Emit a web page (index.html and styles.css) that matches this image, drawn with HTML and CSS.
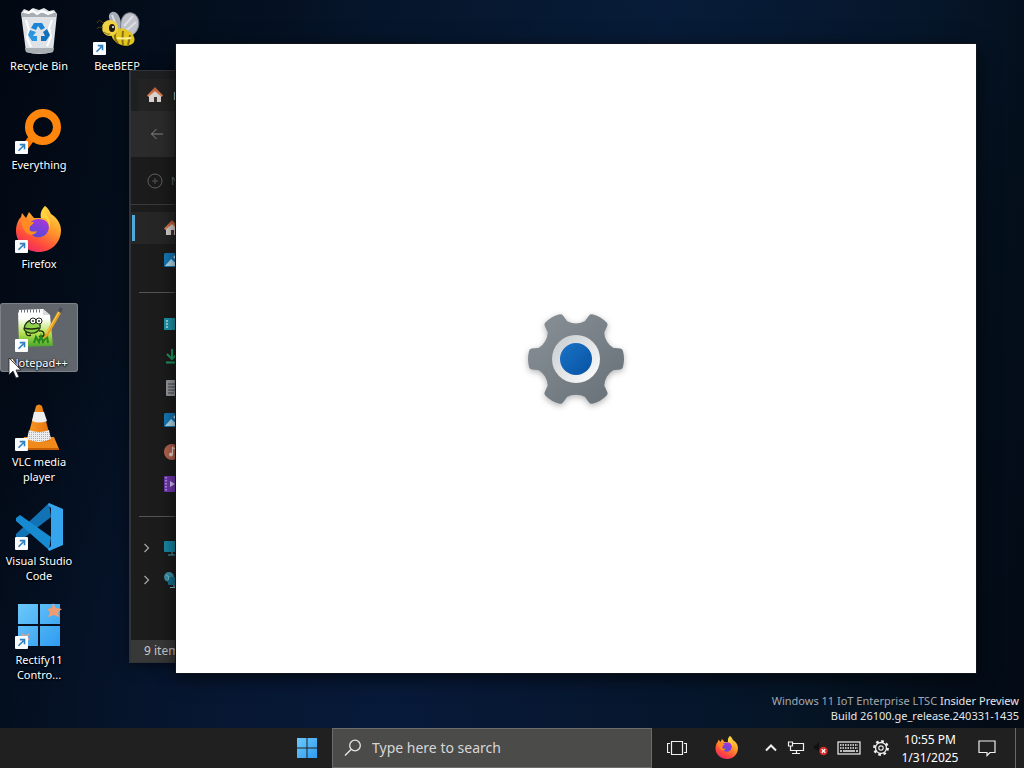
FILE: index.html
```html
<!DOCTYPE html>
<html lang="en">
<head>
    <meta charset="UTF-8">
    <meta name="viewport" content="width=device-width, initial-scale=1.0">
    <title>Desktop</title>
    <link rel="stylesheet" href="styles.css">
</head>
<body>
    <!-- Shared symbols -->
    <svg class="defs" width="0" height="0" aria-hidden="true">
        <defs>
            <linearGradient id="fox" x1="0.8" y1="0" x2="0.25" y2="1">
                <stop offset="0" stop-color="#ffe14a"/>
                <stop offset="0.4" stop-color="#ff9a2a"/>
                <stop offset="0.75" stop-color="#ff4a3d"/>
                <stop offset="1" stop-color="#e8256c"/>
            </linearGradient>
            <linearGradient id="globe" x1="0.7" y1="0" x2="0.3" y2="1">
                <stop offset="0" stop-color="#a838d8"/>
                <stop offset="1" stop-color="#5549d8"/>
            </linearGradient>
            <linearGradient id="win" x1="0" y1="0" x2="1" y2="1">
                <stop offset="0" stop-color="#6cc8fb"/>
                <stop offset="1" stop-color="#2f9cf0"/>
            </linearGradient>
            <linearGradient id="gear" x1="0" y1="0" x2="1" y2="1">
                <stop offset="0" stop-color="#899197"/>
                <stop offset="1" stop-color="#687078"/>
            </linearGradient>
            <linearGradient id="ring" x1="0" y1="0" x2="1" y2="1">
                <stop offset="0" stop-color="#c6cace"/>
                <stop offset="1" stop-color="#ffffff"/>
            </linearGradient>
            <linearGradient id="hub" x1="0" y1="0" x2="1" y2="1">
                <stop offset="0" stop-color="#1a72c6"/>
                <stop offset="1" stop-color="#0752a2"/>
            </linearGradient>
            <linearGradient id="note" x1="0" y1="0" x2="0" y2="1">
                <stop offset="0.25" stop-color="#ffffff"/>
                <stop offset="0.65" stop-color="#b5e04c"/>
                <stop offset="1" stop-color="#48a42c"/>
            </linearGradient>
            <linearGradient id="cone" x1="0" y1="0" x2="1" y2="0">
                <stop offset="0" stop-color="#f89b28"/>
                <stop offset="1" stop-color="#e5700b"/>
            </linearGradient>
            <linearGradient id="roof" x1="0" y1="0" x2="0" y2="1">
                <stop offset="0" stop-color="#b5532e"/>
                <stop offset="1" stop-color="#e58a5c"/>
            </linearGradient>
            <pattern id="dots" width="2" height="2" patternUnits="userSpaceOnUse">
                <rect width="2" height="2" fill="#eceef0"/>
                <rect width="1" height="1" fill="#a9adb4"/>
            </pattern>
            <symbol id="shortcut" viewBox="0 0 13 13">
                <rect width="13" height="13" rx="1" fill="#fafcfd"/>
                <path d="M3.5 9.7 8.5 4.7M4.8 3.6H9.5V8.3" fill="none" stroke="#2f7fc0" stroke-width="1.6"/>
            </symbol>
            <symbol id="firefox" viewBox="0 0 48 48">
                <path d="M30 0c4 3 5 6 6 8 5 3 10 9 10 16 0 13-10 22-22 22S1 37 1 25c0-6 2-11 5-14l1-4 4 5 3-6 5 6 7 0c0-5 1-9 4-12z" fill="url(#fox)"/>
                <path d="M15 17c3-4 9-5 14-3 4 2 6 6 4 11-2 5-7 7-12 6-5-1-7-6-6-14z" fill="url(#globe)"/>
                <path d="M7 12c2 4 7 4 12 4-1 3-5 4-5 7 0 3 5 3 8 2-2 5-9 5-12 0-3-4-4-8-3-13z" fill="#ff8b22"/>
                <path d="M26 12c4-1 9 3 8 10 2-3 1-8-1-11-2-3-3-6-3-11-4 4-5 8-4 12z" fill="#ffd43e"/>
            </symbol>
            <symbol id="house" viewBox="0 0 16 16">
                <path d="M2 7.5 8 2.5l6 5V15H10V10H7v5H2z" fill="#d8d4d2"/>
                <path d="M7 10h3v5H7z" fill="#42352f"/>
                <path d="M8 0 0 8.5 1.4 10 8 4.2 14.6 10 16 8.5z" fill="url(#roof)"/>
            </symbol>
            <symbol id="picture" viewBox="0 0 16 16">
                <rect y="1" width="16" height="14" rx="1.5" fill="#157ab8"/>
                <path d="M1 14 7 7l8 7z" fill="#b8def0"/>
                <circle cx="11" cy="5" r="1.5" fill="#d8edf6"/>
            </symbol>
        </defs>
    </svg>

    <main class="desktop">
        <div class="icons">
            <button class="icon">
                <span class="icon-art">
                    <svg viewBox="0 0 48 48" width="48" height="48">
                        <path d="M6 5 9 1l5 2 4-3 6 2 5-2 5 3 5-1 3 4-4 38q-14 4-27 0z" fill="#dfe3e7"/>
                        <path d="M6 5h36l-1 4H7zM10 40h29l-1 4q-14 3-27 0z" fill="#a9aeb5"/>
                        <path d="M9 4l5 1 3-3 5 4 5-3 6 3 5-2M11 12l3 10-2 8 4 9M37 12l-3 8 2 9-4 9" fill="none" stroke="#ffffff" stroke-width="2"/>
                        <path d="M19 15h8l3 5-4 2-3-4-2 4-5-2z" fill="#1c84d6"/>
                        <path d="M32 21l3 6-4 6h-5v-5h4l-2-4z" fill="#1370bd"/>
                        <path d="M15 22l6 2-3 4h4v5h-5l-4-6z" fill="#2a95e2"/>
                    </svg>
                </span>
                <span class="icon-label">Recycle Bin</span>
            </button>
            <button class="icon">
                <span class="icon-art">
                    <svg viewBox="0 0 48 48" width="48" height="48">
                        <path d="M24 21C16 15 13 6 19 4s10 8 9 17z" fill="#a8acb5"/>
                        <path d="M28 23C26 12 31 3 39 5s9 14 3 20-11 3-14-2z" fill="#bfc2c9" stroke="#777c88"/>
                        <path d="M31 18 40 8M34 22l9-8M23 17 19 7" stroke="#dcdfe5" stroke-width="2"/>
                        <ellipse cx="30" cy="29" rx="12" ry="8" transform="rotate(22 30 29)" fill="#e2c51d"/>
                        <path d="M23 23q-3 8 2 12M30 23q-1 9 0 14M37 27q-1 6-2 10" fill="none" stroke="#8a7014" stroke-width="2"/>
                        <circle cx="17" cy="20" r="8" fill="#efd344"/>
                        <path d="M24 30q6 1 14 0" stroke="#fff28c" stroke-width="2" fill="none"/>
                        <ellipse cx="19" cy="20" rx="3" ry="4" fill="#1f1a12"/>
                        <circle cx="20" cy="19" r="1" fill="#fff"/>
                        <path d="M10 15Q6 10 4 15M10 20q-5-2-6 1" fill="none" stroke="#4a4010"/>
                        <path d="M11 24q3 3 6 2" stroke="#8a6a15" fill="none"/>
                    </svg>
                    <svg class="badge" width="13" height="13"><use href="#shortcut"/></svg>
                </span>
                <span class="icon-label">BeeBEEP</span>
            </button>
            <button class="icon">
                <span class="icon-art">
                    <svg viewBox="0 0 48 48" width="48" height="48">
                        <path d="M19 28 10 40" stroke="#f97a08" stroke-width="7"/>
                        <circle cx="28" cy="20" r="14" fill="none" stroke="#ff850d" stroke-width="8"/>
                    </svg>
                    <svg class="badge" width="13" height="13"><use href="#shortcut"/></svg>
                </span>
                <span class="icon-label">Everything</span>
            </button>
            <button class="icon">
                <span class="icon-art">
                    <svg width="48" height="48"><use href="#firefox"/></svg>
                    <svg class="badge" width="13" height="13"><use href="#shortcut"/></svg>
                </span>
                <span class="icon-label">Firefox</span>
            </button>
            <button class="icon selected">
                <span class="icon-art">
                    <svg viewBox="0 0 48 48" width="48" height="48">
                        <path d="M3 5 28 4l7 6 3 31-34 1z" fill="url(#note)"/>
                        <path d="M28 4v6h7" fill="#d7dadd"/>
                        <path d="M3 6h24" stroke="#6b7078" stroke-width="3" stroke-dasharray="1 2"/>
                        <path d="M9 24q1-8 8-9 9-2 8 8-3 6-10 5-5-1-6-4z" fill="#8fd04a" stroke="#1d3a12" stroke-width="1.3"/>
                        <circle cx="18" cy="16" r="3" fill="#fff" stroke="#202820"/>
                        <circle cx="24" cy="16" r="3" fill="#fff" stroke="#202820"/>
                        <path d="M18 15v2M24 15v2M9 23q7 2 15 0M11 27q0 5 5 3M24 26q5-1 5 4-2 3-5 1" fill="none" stroke="#1d2a12" stroke-width="1.4"/>
                        <path d="M19 38l2-6 3 5 2-6 2 6 4-6 1 7" fill="none" stroke="#24851c" stroke-width="2"/>
                        <path d="M30 29 43 6l3 2-13 23-4 3z" fill="#e5a020"/>
                        <path d="M31 29 44 7" stroke="#ffd260"/>
                        <path d="M43 6l2-4 3 2-2 4z" fill="#4d5059"/>
                    </svg>
                    <svg class="badge" width="13" height="13"><use href="#shortcut"/></svg>
                </span>
                <span class="icon-label">Notepad++</span>
            </button>
            <button class="icon">
                <span class="icon-art">
                    <svg viewBox="0 0 48 48" width="48" height="48">
                        <path d="M9 33h30l5 12H4z" fill="#f08a1b"/>
                        <path d="M4 44h40v2H4z" fill="#c65e06"/>
                        <path d="M21 2q3-3 6 0l9 34q-12 6-24 0z" fill="url(#cone)"/>
                        <path d="M19 8h10l3 9q-8 3-15 0z" fill="#eceef0"/>
                        <path d="M14 26q10 4 20 0l2 9q-12 6-24 0z" fill="url(#dots)"/>
                    </svg>
                    <svg class="badge" width="13" height="13"><use href="#shortcut"/></svg>
                </span>
                <span class="icon-label">VLC media player</span>
            </button>
            <button class="icon">
                <span class="icon-art">
                    <svg viewBox="0 0 48 48" width="48" height="48">
                        <path d="M34 0 1 31v4l4 3L36 14z" fill="#1173b5"/>
                        <path d="M5 12 1 15v3l33 29 2-13z" fill="#168bd2"/>
                        <path d="M34 0 48 6V42L34 48 33 46 36 43V5L33 2z" fill="#35a5ed"/>
                    </svg>
                    <svg class="badge" width="13" height="13"><use href="#shortcut"/></svg>
                </span>
                <span class="icon-label">Visual Studio Code</span>
            </button>
            <button class="icon">
                <span class="icon-art">
                    <svg viewBox="0 0 48 48" width="48" height="48">
                        <path d="M3 2h20v20H3zM25 2h20v20H25zM3 24h20v20H3zM25 24h20v20H25z" fill="url(#win)"/>
                        <path d="M38 1l3 5 6 1-4 3 1 5-5-2-6 2 2-5-3-3 5-1z" fill="#ef9d70"/>
                        <path d="M7 31l3 2 5-2-2 4 2 3-8 1z" fill="#c9a7a0"/>
                    </svg>
                    <svg class="badge" width="13" height="13"><use href="#shortcut"/></svg>
                </span>
                <span class="icon-label">Rectify11 Contro...</span>
            </button>
        </div>

        <div class="watermark">
            <div><span class="watermark-dim">Windows 11 IoT Enterprise LTSC</span> Insider Preview</div>
            <div>Build 26100.ge_release.240331-1435</div>
        </div>

        <!-- File explorer, behind the settings window -->
        <section class="window explorer" aria-label="File Explorer">
            <div class="explorer-title">
                <div class="explorer-tab">
                    <svg width="16" height="16"><use href="#house"/></svg>
                    <span>Home</span>
                </div>
            </div>
            <div class="explorer-nav">
                <button class="tool" aria-label="Back">
                    <svg viewBox="0 0 14 14" width="14" height="14"><path d="M13 7H1.5M6.5 2l-5 5 5 5" fill="none" stroke="#858585"/></svg>
                </button>
            </div>
            <div class="explorer-tools">
                <button class="tool">
                    <svg viewBox="0 0 16 16" width="16" height="16"><path d="M8 5v6M5 8h6" stroke="#565656"/><circle cx="8" cy="8" r="7" fill="none" stroke="#606060"/></svg>
                    <span>New</span>
                </button>
            </div>
            <div class="explorer-list">
                <div class="row current"><svg width="16" height="16"><use href="#house"/></svg></div>
                <div class="row"><svg width="16" height="16"><use href="#picture"/></svg></div>
                <hr class="divider">
                <div class="row"><svg viewBox="0 0 16 16" width="16" height="16"><rect y="2" width="16" height="12" rx="1" fill="#1e98ae"/><path d="M2 5h2M2 8h2M2 11h2" stroke="#bdeef2" stroke-width="1.5"/></svg></div>
                <div class="row"><svg viewBox="0 0 16 16" width="16" height="16"><path d="M8 1v10M3 6l5 5 5-5M2 14.500h12" fill="none" stroke="#1f9b62" stroke-width="2"/></svg></div>
                <div class="row"><svg viewBox="0 0 16 16" width="16" height="16"><rect x="2" width="13" height="16" rx="1" fill="#9a9da1"/><path d="M4 4h9M4 7h9M4 10h9M4 13h6" stroke="#44484c"/></svg></div>
                <div class="row"><svg width="16" height="16"><use href="#picture"/></svg></div>
                <div class="row"><svg viewBox="0 0 16 16" width="16" height="16"><circle cx="8" cy="8" r="8" fill="#b96550"/><circle cx="7" cy="10.500" r="2" fill="#f0d8cf"/><path d="M8.500 10.500V3.500l3 1.500" fill="none" stroke="#f0d8cf" stroke-width="1.2"/></svg></div>
                <div class="row"><svg viewBox="0 0 16 16" width="16" height="16"><rect width="16" height="16" rx="1" fill="#7138b3"/><path d="M2 1v14" stroke="#c8a5ec" stroke-width="1.5" stroke-dasharray="1.5 1.5"/><path d="M6 5l5 3-5 3z" fill="#dfc8f7"/></svg></div>
                <hr class="divider">
                <div class="row">
                    <svg class="chevron" viewBox="0 0 8 12" width="8" height="12"><path d="M1.500 2l4 4-4 4" fill="none" stroke="#a0a0a0" stroke-width="1.300"/></svg>
                    <svg viewBox="0 0 16 16" width="16" height="16"><rect y="1" width="16" height="11" rx="1" fill="#1989a8"/><path d="M8 12v3M4 15h8" stroke="#4faec4"/></svg>
                </div>
                <div class="row">
                    <svg class="chevron" viewBox="0 0 8 12" width="8" height="12"><path d="M1.500 2l4 4-4 4" fill="none" stroke="#a0a0a0" stroke-width="1.300"/></svg>
                    <svg viewBox="0 0 16 16" width="16" height="16"><circle cx="5" cy="5" r="5" fill="#3d91aa"/><rect x="4" y="5" width="12" height="8" rx="1" fill="#167290"/><path d="M2 3l3 2-1 3M10 13v2M6 15.500h8" stroke="#83c8d6" fill="none"/></svg>
                </div>
            </div>
            <div class="explorer-status">9 items</div>
        </section>

        <!-- Settings splash -->
        <section class="window settings" aria-label="Settings">
            <svg class="settings-gear" viewBox="-52 -52 104 104" width="104" height="104">
                <path d="M44 7.500 36 8.300C29.700 12 25.200 19.700 25.200 27.100L28.500 34.300Q23 40 15.500 41.800L10.800 35.400C4.500 31.700-4.500 31.700-10.800 35.400L-15.500 41.800Q-23 40-28.500 34.300L-25.200 27.100C-25.200 19.700-29.700 12-36 8.300L-44 7.500Q-46 0-44-7.500L-36-8.300C-29.700-12-25.200-19.700-25.200-27.100L-28.500-34.300Q-23-40-15.500-41.800L-10.800-35.400C-4.500-31.700 4.500-31.700 10.800-35.400L15.500-41.800Q23-40 28.500-34.300L25.200-27.100C25.200-19.700 29.700-12 36-8.300L44-7.500Q46 0 44 7.500z" fill="url(#gear)" stroke="url(#gear)" stroke-width="6" stroke-linejoin="round"/>
                <circle r="24" fill="url(#ring)"/>
                <circle r="16" fill="url(#hub)"/>
            </svg>
        </section>

        <svg class="cursor" viewBox="0 0 14 22" width="14" height="22" aria-hidden="true">
            <path d="M1 1v17l4-4 3 7 3-1-3-7h5z" fill="#fff" stroke="#22252a" stroke-width="0.8"/>
        </svg>
    </main>

    <footer class="taskbar">
        <button class="task" aria-label="Start">
            <svg viewBox="0 0 20 20" width="20" height="20"><path d="M0 0h9.500v9.500H0zM10.500 0H20v9.500h-9.500zM0 10.500h9.500V20H0zM10.500 10.500H20V20h-9.500z" fill="url(#win)"/></svg>
        </button>
        <label class="search">
            <svg viewBox="0 0 18 18" width="18" height="18"><circle cx="11" cy="6.500" r="5.300" fill="none" stroke="#e4e4e4" stroke-width="1.300"/><path d="M7 10.500 1 16.500" stroke="#e4e4e4" stroke-width="1.500"/></svg>
            <input type="text" aria-label="Search" placeholder="Type here to search">
        </label>
        <button class="task" aria-label="Task View">
            <svg viewBox="0 0 20 16" width="20" height="16"><path d="M4.500 1.500h11v13h-11zM3 3.500H.5v9H3M17 3.500h2.500v9H17" fill="none" stroke="#f0f0f0" stroke-width="1.200"/></svg>
        </button>
        <button class="task" aria-label="Firefox">
            <svg width="24" height="24"><use href="#firefox"/></svg>
        </button>
        <div class="tray">
            <button class="tray-item" aria-label="Show hidden icons">
                <svg viewBox="0 0 12 8" width="12" height="8"><path d="M1 6.500l5-5 5 5" fill="none" stroke="#f0f0f0" stroke-width="2"/></svg>
            </button>
            <button class="tray-item" aria-label="Network">
                <svg viewBox="0 0 18 16" width="18" height="16"><path d="M6 3.500h10.500v7H3.500V7M9.500 10.500v3M5 13.500h8M1.500 2h4v4h-4zM3.500 6v2" fill="none" stroke="#f0f0f0" stroke-width="1.200"/></svg>
            </button>
            <button class="tray-item" aria-label="Volume">
                <svg viewBox="0 0 16 16" width="16" height="16"><path d="M1 5h2l3-3v10l-3-3H1z" fill="#111"/><circle cx="10.500" cy="11" r="4.200" fill="#dc2f2c"/><path d="M8.800 9.300l3.400 3.400M12.200 9.300l-3.400 3.400" stroke="#fff" stroke-width="1.300"/></svg>
            </button>
            <button class="tray-item wide" aria-label="Touch keyboard">
                <svg viewBox="0 0 24 14" width="24" height="14"><rect x="1" y="1" width="22" height="12" fill="none" stroke="#f0f0f0" stroke-width="1.200"/><path d="M3 4h18M3 7h18" stroke="#f0f0f0" stroke-width="1.500" stroke-dasharray="1.500 1"/><path d="M3 10h2M6 10h12M19 10h2" stroke="#f0f0f0" stroke-width="1.300"/></svg>
            </button>
            <button class="tray-item wide" aria-label="Settings">
                <svg viewBox="-9 -9 18 18" width="18" height="18"><circle r="6.700" fill="none" stroke="#f0f0f0" stroke-width="2.400" stroke-dasharray="2.630 2.630"/><circle r="5.500" fill="none" stroke="#f0f0f0" stroke-width="1.300"/><circle r="2.200" fill="none" stroke="#f0f0f0" stroke-width="1.200"/></svg>
            </button>
            <button class="clock">
                <span>10:55 PM</span>
                <span>1/31/2025</span>
            </button>
            <button class="notify" aria-label="Notifications">
                <svg viewBox="0 0 18 18" width="18" height="18"><path d="M1 2h16v11.500h-5L9 16.500v-3H1z" fill="none" stroke="#f0f0f0" stroke-width="1.200"/></svg>
            </button>
            <button class="show-desktop" aria-label="Show desktop"></button>
        </div>
    </footer>
</body>
</html>
```
FILE: styles.css
```css
* {
    margin: 0;
    padding: 0;
    box-sizing: border-box;
}

body {
    font-family: 'Noto Sans', 'Open Sans', sans-serif;
    font-size: 11px;
    line-height: 15px;
    color: #fff;
    height: 100vh;
    display: flex;
    flex-direction: column;
    overflow: hidden;
}

button {
    font: inherit;
    color: inherit;
    background: transparent;
    border: none;
}

svg {
    display: block;
    flex-shrink: 0;
}

.defs {
    position: absolute;
}

/* Desktop */
.desktop {
    flex: 1;
    min-height: 0;
    position: relative;
    background:
        radial-gradient(ellipse at 65% 0, rgba(8, 30, 62, 0.8), transparent 40%),
        radial-gradient(ellipse at 38% 100%, #081a3a, transparent 50%),
        linear-gradient(100deg, #020812 0%, #051326 30%, #051424 80%, #030a14 100%);
}

.icons {
    height: 100%;
    padding-top: 6px;
    display: grid;
    grid-auto-flow: column;
    grid-template-rows: repeat(auto-fill, 99px);
    grid-auto-columns: 78px;
    align-items: start;
}

.icons .icon:nth-child(2) {
    grid-area: 1 / 2;
}

.icon {
    padding: 2px 4px;
    border-radius: 3px;
    display: flex;
    flex-direction: column;
    align-items: center;
    gap: 2px;
}

.icon.selected {
    background: rgba(155, 157, 160, 0.62);
    box-shadow: inset 0 0 0 1px rgba(170, 175, 180, 0.4);
}

.icon-art {
    position: relative;
}

.badge {
    position: absolute;
    left: 0;
    bottom: 1px;
}

.icon-label {
    text-align: center;
    text-shadow: 0 1px 2px #000, 0 0 2px #000;
}

.watermark {
    position: absolute;
    right: 5px;
    bottom: 5px;
    text-align: right;
    color: #e4e7ea;
}

.watermark-dim {
    color: #a4a9b0;
}

.cursor {
    position: absolute;
    left: 8px;
    top: 357px;
}

/* Windows */
.window {
    position: absolute;
    display: flex;
}

.settings {
    top: 44px;
    right: 48px;
    bottom: 55px;
    left: 176px;
    align-items: center;
    justify-content: center;
    background: #fff;
    box-shadow: 0 0 0 1px #10141c, 0 4px 18px rgba(0, 0, 0, 0.7);
}

.settings-gear {
    filter: drop-shadow(0 2px 3px rgba(0, 0, 0, 0.3));
}

.explorer {
    top: 70px;
    right: 160px;
    bottom: 65px;
    left: 129px;
    flex-direction: column;
    background: #1c1c1c;
    border: 1px solid #303338;
    border-left-width: 2px;
    box-shadow: 0 2px 12px rgba(0, 0, 0, 0.5);
}

.explorer-title {
    height: 40px;
    padding: 8px 8px 0;
    background: #1e1f21;
}

.explorer-tab {
    height: 32px;
    padding: 0 8px;
    display: flex;
    align-items: center;
    gap: 10px;
    background: #232323;
}

.explorer-tab span {
    color: #ddd;
}

.explorer-nav,
.explorer-tools {
    padding: 0 16px;
    display: flex;
    align-items: center;
}

.explorer-nav {
    height: 46px;
    background: #2b2b2b;
}

.explorer-tools {
    height: 48px;
    background: #1b1b1b;
    border-bottom: 1px solid #3a3a3a;
}

.tool {
    display: flex;
    align-items: center;
    gap: 8px;
    color: #666;
}

.explorer-nav .tool {
    padding-left: 3px;
}

.explorer-list {
    flex: 1;
    padding-top: 7px;
}

.row {
    height: 32px;
    padding-left: 33px;
    display: flex;
    align-items: center;
}

.row.current {
    background: linear-gradient(#4fa9da, #4fa9da) 1px 3px / 3px 26px no-repeat, #262626;
}

.row .chevron {
    margin-left: -21px;
    margin-right: 13px;
}

.divider {
    margin: 16px 8px 15px;
    border: none;
    border-top: 1px solid #555;
}

.explorer-status {
    padding: 3px 13px 4px;
    font-size: 12px;
    background: #383838;
    color: #c8c8c8;
}

/* Taskbar */
.taskbar {
    height: 40px;
    display: flex;
    justify-content: flex-end;
    background: #202020;
}

.task {
    width: 50px;
    display: flex;
    align-items: center;
    justify-content: center;
}

.search {
    width: 320px;
    padding: 0 11px;
    display: flex;
    align-items: center;
    gap: 10px;
    background: #4b4b4a;
    border: 1px solid #6c6c6c;
}

.search input {
    flex: 1;
    min-width: 0;
    font: inherit;
    font-size: 14px;
    line-height: 20px;
    color: #fff;
    background: transparent;
    border: none;
    outline: none;
}

.search input::placeholder {
    color: #d6d6d6;
}

.tray {
    margin-left: 6px;
    display: flex;
}

.tray-item {
    width: 25px;
    display: flex;
    align-items: center;
    justify-content: center;
}

.tray-item.wide {
    width: 32px;
}

.clock {
    width: 66px;
    font-size: 12px;
    display: flex;
    flex-direction: column;
    align-items: center;
    justify-content: center;
    gap: 3px;
}

.notify {
    width: 48px;
    margin-right: 4px;
    display: flex;
    align-items: center;
    justify-content: center;
}

.show-desktop {
    width: 9px;
    border-left: 1px solid #686868;
}
```
